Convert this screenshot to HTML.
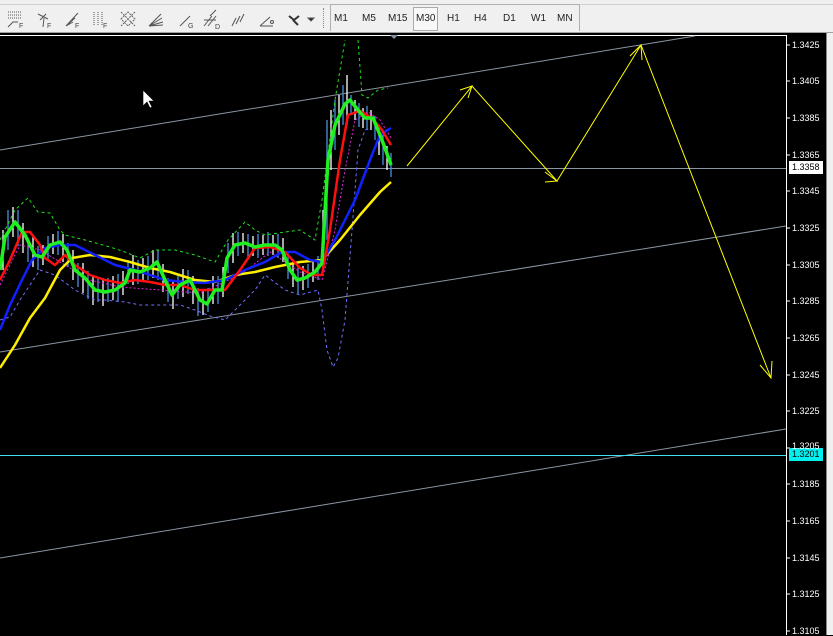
<!DOCTYPE html>
<html><head><style>
html,body{margin:0;padding:0;width:833px;height:635px;overflow:hidden;background:#000;font-family:"Liberation Sans",sans-serif}
#tb{position:absolute;left:0;top:0;width:833px;height:32px;background:#f0f0f0;border-bottom:1px solid #a0a0a0}
.tf{position:absolute;top:13px;font-size:10px;color:#222}
.ax{position:absolute;left:792px;font-size:9px;color:#fff;font-family:"Liberation Sans",sans-serif}
</style></head><body>
<div id="tb">
<div style="position:absolute;left:0;top:0;width:833px;height:4px;border-bottom:1px solid #d0d0d0"></div>
<div style="position:absolute;left:330px;top:4px;width:248px;height:26px;border:1px solid #b0b0b0;border-bottom:none"></div>
<div style="position:absolute;left:323px;top:8px;width:2px;height:20px;border-left:1px dotted #888"></div>
<span class="tf" style="left:334px">M1</span>
<span class="tf" style="left:362px">M5</span>
<span class="tf" style="left:388px">M15</span>
<span class="tf" style="left:413px;top:7px;padding:5px 2px 6px;border:1px solid #aaa;background:#f8f8f8">M30</span>
<span class="tf" style="left:447px">H1</span>
<span class="tf" style="left:474px">H4</span>
<span class="tf" style="left:503px">D1</span>
<span class="tf" style="left:531px">W1</span>
<span class="tf" style="left:557px">MN</span>
<svg style="position:absolute;left:0;top:0" width="320" height="32" stroke="#555" fill="none" stroke-width="1">
<path d="M8 12h14M8 15h14M8 18h14" stroke-dasharray="1 1"/><path d="M8 27l5-5h5"/><text x="19" y="28" font-size="7" fill="#444" stroke="none">F</text>
<path d="M38 14l10 5M40 20l6-6M44 18l-1 9"/><text x="47" y="28" font-size="7" fill="#444" stroke="none">F</text>
<path d="M66 26l12-13M66 26l9-8M66 26l7-4"/><text x="75" y="28" font-size="7" fill="#444" stroke="none">F</text>
<path d="M94 12v14M98 12v14M102 12v14" stroke-dasharray="1 1"/><text x="103" y="28" font-size="7" fill="#444" stroke="none">F</text>
<path d="M121 12l14 14M135 12l-14 14M121 19l7-7 7 7-7 7z" stroke="#666" stroke-dasharray="2 1"/>
<path d="M149 26l12-12M149 26l13-8M149 26l14-4M149 26l14-1"/>
<path d="M180 26l10-10"/><text x="188" y="28" font-size="7" fill="#444" stroke="none">G</text>
<path d="M204 26l8-10M208 26l8-10M210 16l6-6M204 20h12"/><text x="215" y="29" font-size="7" fill="#444" stroke="none">D</text>
<path d="M232 26l4-8M236 24l4-8M240 22l4-8"/>
<path d="M260 26l10-9M260 26h13"/><circle cx="272" cy="22" r="1.5"/>
<path d="M289 16l5 4 5-4M293 20l5 5" stroke="#333" stroke-width="2"/><path d="M308 18l3 3 3-3z" fill="#222"/>
</svg>
</div>
<div style="position:absolute;left:826px;top:33px;width:7px;height:602px;background:#f0f0f0;border-left:1px solid #888"></div>
<svg style="position:absolute;left:0;top:33px" width="826" height="602" viewBox="0 33 826 602">
<line x1="0" y1="35.5" x2="786" y2="35.5" stroke="#fff"/>
<line x1="786.5" y1="35" x2="786.5" y2="635" stroke="#fff"/>
<path d="M390 35l4 4 4-4z" fill="#8090a0"/>
<g stroke="#8a96a4" stroke-width="1">
<line x1="0" y1="150" x2="695" y2="36"/>
<line x1="0" y1="352" x2="786" y2="226"/>
<line x1="0" y1="558" x2="786" y2="429"/>
<line x1="0" y1="168.5" x2="786" y2="168.5"/>
</g>
<line x1="0" y1="455.5" x2="786" y2="455.5" stroke="#40e0f0"/>
<g stroke="#fff"><path d="M786 45h4M786 81h4M786 118h4M786 155h4M786 191h4M786 228h4M786 265h4M786 301h4M786 338h4M786 375h4M786 411h4M786 448h4M786 484h4M786 521h4M786 558h4M786 594h4M786 631h4"/></g>
<g stroke-width="1.3">
<path stroke="#fff" d="M3 230V270M13 207V237M23 223V253M33 237V267M43 245V265M53 234V254M63 234V262M73 250V280M83 263V293M93 275V305M103 278V306M113 276V300M123 271V295M133 255V285M143 258V282M153 250V278M163 264V292M173 281V309M183 269V297M193 276V304M203 291V315M213 276V304M223 267V297M233 233V263M243 233V253M253 236V256M263 235V255M273 235V255M283 238V262M293 263V287M303 266V290M313 262V282M323 210V270M331 110V170M339 95V135M347 75V125M355 100V120M363 108V128M371 110V130M379 125V155M387 146V170"/>
<path stroke="#4a90e2" d="M8 210V250M18 210V246M28 238V262M38 246V270M48 236V260M58 231V255M68 243V267M78 263V287M88 271V299M98 278V302M108 278V302M118 274V302M128 260V284M138 260V284M148 256V280M158 250V280M168 278V302M178 275V299M188 270V294M198 288V316M208 288V312M218 276V304M228 243V273M238 232V256M248 234V258M258 234V258M268 232V256M278 234V258M288 251V279M298 266V294M308 264V288M318 256V280M327 120V240M335 100V150M343 85V125M351 95V115M359 103V127M367 106V130M375 116V140M383 135V165M391 153V177"/>
</g>
<g fill="none" stroke-width="1">
<polyline stroke="#20e020" stroke-dasharray="3 3" points="0,240 15,210 28,198 38,212 50,213 60,230 65,235 85,240 110,247 125,252 140,258 155,250 175,250 195,255 215,262 228,240 245,222 255,230 265,235 285,232 300,230 315,240 322,200 335,100 345,40"/>
<polyline stroke="#20e020" stroke-dasharray="3 3" points="358,40 362,95 368,98 378,90 388,88"/>
<polyline stroke="#7070ff" stroke-dasharray="3 3" points="0,320 10,317 20,300 30,285 40,270 55,275 75,290 95,300 105,300 125,302 140,305 160,305 180,305 195,310 210,316 225,320 240,305 255,290 265,275 285,290 300,295 318,290 322,310 327,350 333,367 338,358 345,320 352,230 358,150 365,130 372,128"/>
<polyline stroke="#e020e0" stroke-dasharray="2 2" points="0,285 20,245 40,250 60,262 90,280 120,287 160,290 200,293 240,275 270,252 300,272 322,280 335,230 345,170 355,120 368,112 380,120 391,138"/>
</g>
<g fill="none" stroke-width="2.5" stroke-linejoin="round">
<polyline stroke="#ffee00" points="0,368 15,345 30,318 45,298 60,270 72,258 90,255 110,257 130,262 150,268 170,272 195,280 215,282 235,275 255,272 275,267 300,262 322,260 340,240 360,215 380,192 391,182"/>
<polyline stroke="#1020ff" points="0,330 10,305 22,280 32,260 45,248 60,245 75,245 95,255 115,265 135,270 150,275 165,280 185,282 205,283 225,280 245,270 265,262 282,252 295,252 310,260 322,262 335,240 355,200 370,160 380,135 391,128"/>
<polyline stroke="#ff1010" points="0,280 10,260 22,232 30,232 40,245 45,258 55,265 65,255 75,265 90,275 105,280 120,283 135,280 150,282 165,285 180,285 195,290 210,290 225,290 240,270 255,248 270,247 285,252 300,268 312,275 322,275 330,230 340,160 348,115 360,111 372,118 382,130 391,145"/>
<polyline stroke="#20f020" stroke-width="3.5" points="0,270 5,237 15,222 25,235 35,255 42,257 50,245 60,242 67,250 75,270 85,278 95,290 105,292 115,290 125,283 130,270 140,272 150,268 157,262 165,280 172,295 180,285 190,280 200,300 207,304 215,290 222,290 227,258 235,245 245,243 255,247 265,245 275,245 282,250 290,270 297,280 305,278 315,272 322,263 328,160 335,125 345,104 350,100 358,110 365,118 373,118 380,135 385,148 391,165"/>
</g>
<g fill="none" stroke="#ffff00" stroke-width="1">
<polyline points="407,166 472,86 557,181 641,45 771,378"/>
<path d="M460 90l12-4-4 12M545 172l12 9-12 1M630 56l11-11 1 15M760 365l11 13 1-17"/>
</g>
<path d="M143 90v16l4-4 3 6 2-1-3-6h5z" fill="#fff" stroke="#000" stroke-width=".6"/>
<rect x="789" y="161" width="34" height="13" fill="#fff"/>
<rect x="789" y="448" width="34" height="13" fill="#00f0f0"/>
</svg>
<div class="ax" style="top:40px">1.3425</div><div class="ax" style="top:76px">1.3405</div><div class="ax" style="top:113px">1.3385</div><div class="ax" style="top:150px">1.3365</div>
<div class="ax" style="top:162px;color:#000">1.3358</div>
<div class="ax" style="top:186px">1.3345</div><div class="ax" style="top:223px">1.3325</div><div class="ax" style="top:260px">1.3305</div><div class="ax" style="top:296px">1.3285</div><div class="ax" style="top:333px">1.3265</div><div class="ax" style="top:370px">1.3245</div><div class="ax" style="top:406px">1.3225</div><div class="ax" style="top:441px">1.3205</div>
<div class="ax" style="top:449px;color:#000">1.3201</div>
<div class="ax" style="top:479px">1.3185</div><div class="ax" style="top:516px">1.3165</div><div class="ax" style="top:553px">1.3145</div><div class="ax" style="top:589px">1.3125</div><div class="ax" style="top:626px">1.3105</div>
</body></html>
